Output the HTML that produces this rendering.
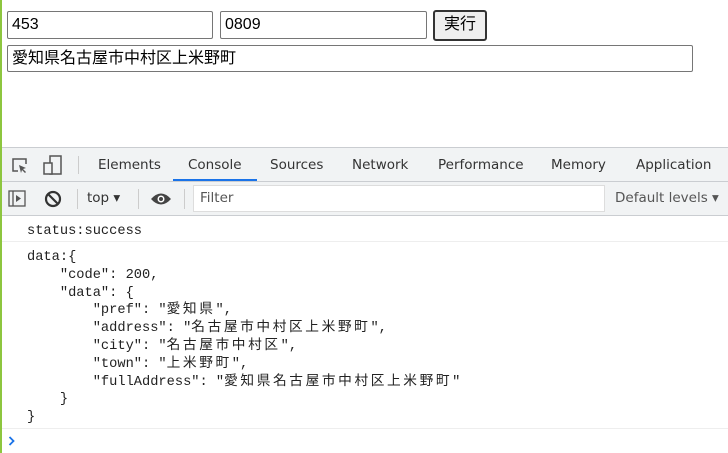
<!DOCTYPE html>
<html><head><meta charset="utf-8"><style>
*{margin:0;padding:0;box-sizing:border-box}
body{width:728px;height:453px;overflow:hidden;background:#fff;position:relative;font-family:"Liberation Sans","Noto Sans CJK JP",sans-serif}
.g{position:absolute;left:0;top:0;width:2px;height:453px;background:#8dc63f}
.in{position:absolute;border:1px solid #767676;border-radius:2px;height:28px;font-size:16px;padding:3px 4px;color:#000;line-height:20px}
.btn{position:absolute;left:433px;top:10px;width:54px;height:31px;border:2px solid #333;border-radius:3px;background:#efefef;font-size:16px;text-align:center;line-height:26px}
.bar1{position:absolute;left:2px;top:147px;right:0;height:35px;background:#f1f3f4;border-top:1px solid #cacdd1;border-bottom:1px solid #cacdd1}
.tab{position:absolute;top:9px;color:#333;font-family:"DejaVu Sans","Liberation Sans",sans-serif;font-size:13.5px}
.bar2{position:absolute;left:2px;top:182px;right:0;height:34px;background:#f1f3f4;border-bottom:1px solid #cacdd1}
.mono{position:absolute;font-family:"Liberation Mono","Noto Sans CJK JP",monospace;font-size:13.7px;color:#222;white-space:pre}
.j{letter-spacing:2.6px}
.sep{position:absolute;width:1px;background:#ccc}
</style></head><body>
<div class="g"></div>
<div class="in" style="left:7px;top:11px;width:206px">453</div>
<div class="in" style="left:220px;top:11px;width:207px">0809</div>
<div class="btn">実行</div>
<div class="in" style="left:7px;top:45px;width:686px;height:27px">愛知県名古屋市中村区上米野町</div>

<div class="bar1">
<svg style="position:absolute;left:9px;top:9px" width="18" height="18" viewBox="0 0 18 18"><path d="M7 14H2V2h13v5" fill="none" stroke="#555" stroke-width="1.5"/><path d="M8 8l7 3-3 1 3 3-1 1-3-3-1 3z" fill="#555"/></svg>
<svg style="position:absolute;left:41px;top:7px" width="20" height="22" viewBox="0 0 20 22"><rect x="7" y="1" width="11" height="18" fill="none" stroke="#555" stroke-width="1.5"/><rect x="1" y="8" width="8" height="11" fill="#f1f3f4" stroke="#555" stroke-width="1.5"/></svg>
<div class="sep" style="left:76px;top:8px;height:18px"></div>
<span class="tab" style="left:96px">Elements</span>
<span class="tab" style="left:186px">Console</span>
<div style="position:absolute;left:171px;top:31px;width:84px;height:2px;background:#1a73e8"></div>
<span class="tab" style="left:268px">Sources</span>
<span class="tab" style="left:350px">Network</span>
<span class="tab" style="left:436px">Performance</span>
<span class="tab" style="left:549px">Memory</span>
<span class="tab" style="left:634px">Application</span>
</div>

<div class="bar2">
<svg style="position:absolute;left:6px;top:8px" width="18" height="17" viewBox="0 0 18 17"><rect x="1" y="1" width="16" height="15" fill="none" stroke="#555" stroke-width="1.3"/><line x1="5" y1="1" x2="5" y2="16" stroke="#555" stroke-width="1.3"/><path d="M8 5l5 3.5-5 3.5z" fill="#555"/></svg>
<svg style="position:absolute;left:42px;top:8px" width="18" height="18" viewBox="0 0 18 18"><circle cx="9" cy="9" r="7" fill="none" stroke="#333" stroke-width="2.2"/><line x1="4" y1="4" x2="14" y2="14" stroke="#333" stroke-width="2.2"/></svg>
<div class="sep" style="left:75px;top:7px;height:20px"></div>
<span class="tab" style="left:85px;top:8px">top ▾</span>
<div class="sep" style="left:136px;top:7px;height:20px"></div>
<svg style="position:absolute;left:148px;top:9px" width="22" height="16" viewBox="0 0 22 16"><path d="M1 8Q11-3 21 8Q11 19 1 8z" fill="#444"/><circle cx="11" cy="8" r="3.5" fill="#fff"/><circle cx="11" cy="8" r="2" fill="#444"/></svg>
<div class="sep" style="left:182px;top:7px;height:20px"></div>
<div style="position:absolute;left:191px;top:3px;width:412px;height:27px;background:#fff;border:1px solid #ddd"></div>
<span class="tab" style="left:198px;top:8px;color:#555">Filter</span>
<span class="tab" style="left:613px;top:8px;color:#555">Default levels ▾</span>
</div>

<div class="mono" style="left:27px;top:224px">status:success</div>
<div style="position:absolute;left:2px;right:0;top:241px;height:1px;background:#eee"></div>
<div class="mono" style="left:27px;top:249px;line-height:17.8px">data:{
    "code": 200,
    "data": {
        "pref": "<span class="j">愛知県</span>",
        "address": "<span class="j">名古屋市中村区上米野町</span>",
        "city": "<span class="j">名古屋市中村区</span>",
        "town": "<span class="j">上米野町</span>",
        "fullAddress": "<span class="j">愛知県名古屋市中村区上米野町</span>"
    }
}</div>
<div style="position:absolute;left:2px;right:0;top:428px;height:1px;background:#eee"></div>
<svg style="position:absolute;left:8px;top:436px" width="8" height="10" viewBox="0 0 8 10"><path d="M1.5 1l4 4-4 4" fill="none" stroke="#1a73e8" stroke-width="1.8"/></svg>
</body></html>
